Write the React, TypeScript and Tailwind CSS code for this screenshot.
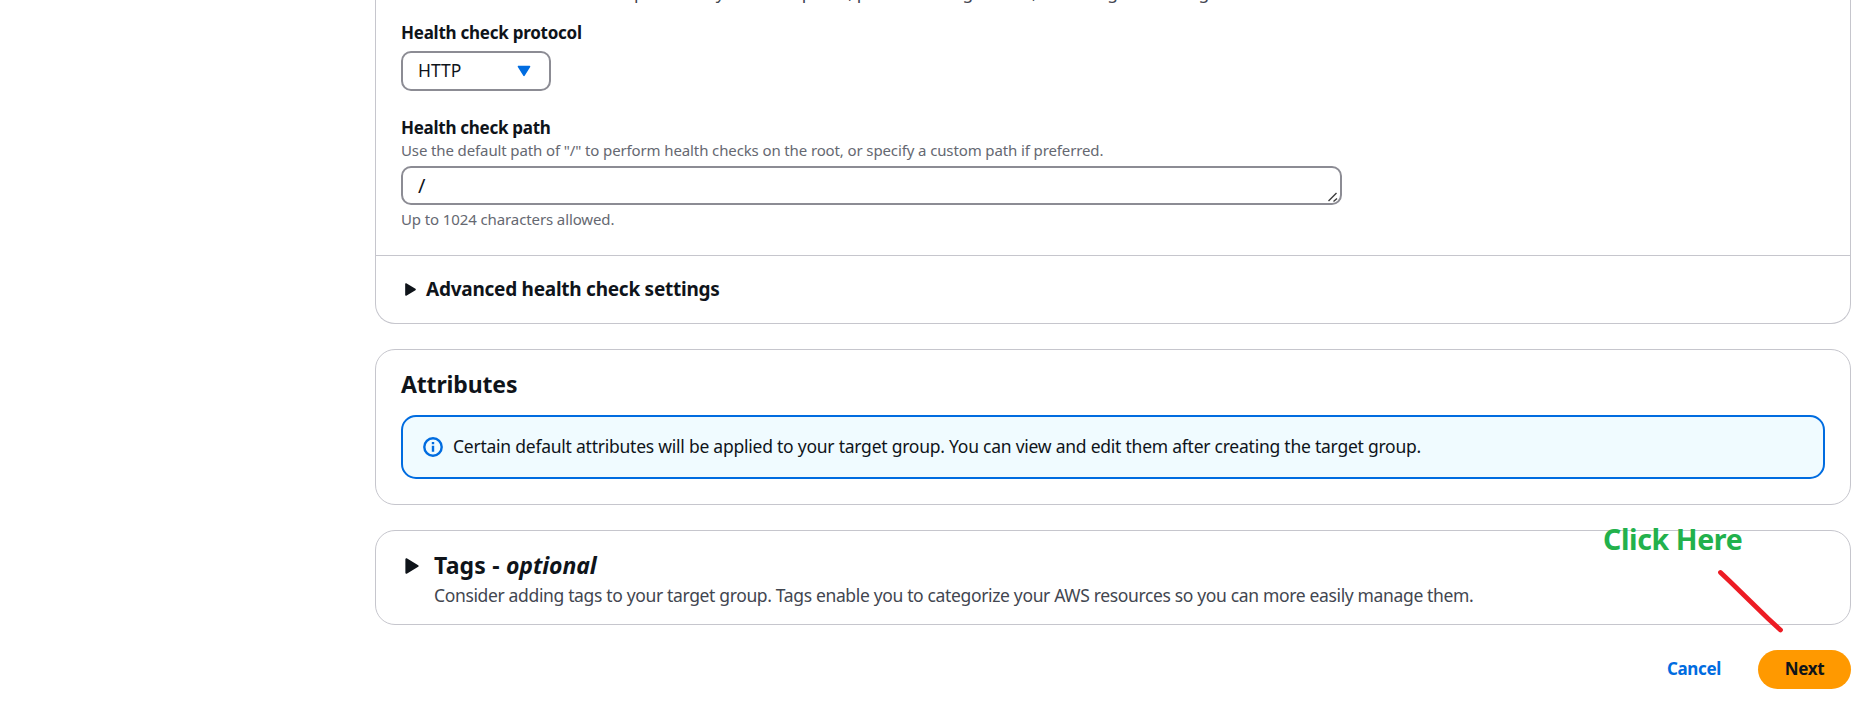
function Caret({ className }: { className: string }) {
  return (
    <svg viewBox="0 0 12 14" className={className} aria-hidden="true">
      <path d="M1 1v12l10-6z" fill="#0f141a" stroke="#0f141a" strokeWidth="1.6" strokeLinejoin="round" />
    </svg>
  );
}

function InfoIcon() {
  return (
    <svg viewBox="0 0 20 20" className="h-5 w-5 shrink-0" fill="none" stroke="#006ce0" strokeWidth="2.4" aria-hidden="true">
      <circle cx="10" cy="10" r="8.7" />
      <path d="M10 8.8v6M10 5v2.3" />
    </svg>
  );
}

function HealthChecks() {
  return (
    <section className="-mt-5 rounded-b-[20px] border border-t-0 border-[#c6c6cd]">
      <div className="px-[25px] pb-[26px]">
        <p className="h-6 text-[17.5px] leading-6 tracking-[-0.325px] text-[#424650]">
          The associated load balancer periodically sends requests, per the settings below, to the registered targets to test their status.
        </p>

        <div className="mt-[17px] text-[17px] leading-6 font-bold tracking-[-0.25px]">Health check protocol</div>
        <button className="mt-1.5 flex h-10 w-[150px] items-center justify-between rounded-[10px] border-2 border-[#8c8c94] pr-[18px] pl-[15px] text-[17.5px] leading-6">
          <span className="pb-0.5">HTTP</span>
          <svg viewBox="0 0 14 12" className="h-3 w-3.5" aria-hidden="true">
            <path d="M1.5 1.5h11L7 10.3z" fill="#006ce0" stroke="#006ce0" strokeWidth="1.6" strokeLinejoin="round" />
          </svg>
        </button>

        <div className="mt-[25px] text-[17px] leading-6 font-bold tracking-[-0.28px]">Health check path</div>
        <p className="text-[15px] leading-5 tracking-[-0.12px] text-[#656871]">
          Use the default path of "/" to perform health checks on the root, or specify a custom path if preferred.
        </p>
        <div className="relative mt-1.5 flex h-[39px] w-[941px] items-center rounded-[10px] border-2 border-[#8c8c94] pl-[15px] text-[20px] leading-6">
          /
          <svg viewBox="0 0 10 10" className="absolute right-0.5 bottom-px h-2.5 w-2.5" stroke="#3c3c3c" strokeWidth="1.4" aria-hidden="true">
            <path d="M.5 9 8.5 1M5.5 9.5 9 6.5" />
          </svg>
        </div>
        <p className="mt-1 text-[15px] leading-5 tracking-[-0.11px] text-[#656871]">Up to 1024 characters allowed.</p>
      </div>
      <div className="flex h-[68px] items-start border-t border-[#c6c6cd] pt-5 pl-[29px]">
        <Caret className="mt-[6.5px] h-[13px] w-[11px]" />
        <h3 className="ml-[10px] text-[19px] leading-[26px] font-bold tracking-[-0.25px]">Advanced health check settings</h3>
      </div>
    </section>
  );
}

function Attributes() {
  return (
    <section className="mt-[25px] h-[156px] rounded-[20px] border border-[#c6c6cd] px-[25px] pt-[19px]">
      <h2 className="text-[23px] leading-[30px] font-bold tracking-[-0.15px]">Attributes</h2>
      <div className="mt-4 flex h-16 items-center gap-2.5 rounded-[15px] border-2 border-[#006ce0] bg-[#f0fbff] pl-5">
        <InfoIcon />
        <p className="pb-0.5 text-[17.5px] leading-6 tracking-[-0.24px]">
          Certain default attributes will be applied to your target group. You can view and edit them after creating the target group.
        </p>
      </div>
    </section>
  );
}

function Tags() {
  return (
    <section className="mt-[25px] flex h-[95px] rounded-[20px] border border-[#c6c6cd] pt-[19px] pl-[29px]">
      <Caret className="mt-2 h-4 w-[14px]" />
      <div className="ml-[15px]">
        <h2 className="text-[23px] leading-[30px] font-bold tracking-[0.2px]">
          Tags - <i className="tracking-[-0.1px]">optional</i>
        </h2>
        <p className="mt-[3px] text-[17.5px] leading-6 tracking-[-0.35px] text-[#424650]">
          Consider adding tags to your target group. Tags enable you to categorize your AWS resources so you can more easily manage them.
        </p>
      </div>
    </section>
  );
}

function Annotation() {
  return (
    <div className="pointer-events-none absolute top-[519px] left-[1603px]">
      <p className="text-[28.5px] leading-[40px] font-bold tracking-[-0.38px] whitespace-nowrap text-[#22b14c]">Click Here</p>
      <svg viewBox="0 0 70 76" className="ml-[113px] h-[76px] w-[70px]" aria-hidden="true">
        <path d="M4.5 13.5 14 22.5l20 19.5 18 17.5 12.5 11.5" fill="none" stroke="#ed1c24" strokeWidth="4.8" strokeLinecap="round" />
      </svg>
    </div>
  );
}

export default function App() {
  return (
    <div className="relative h-[711px] w-[1852px] overflow-hidden bg-white font-['Noto_Sans',sans-serif] text-[#0f141a]">
      <main className="ml-[375px] flex w-[1476px] flex-col">
        <HealthChecks />
        <Attributes />
        <Tags />
        <div className="mt-[25px] flex h-[39px] items-center justify-end text-[17px] leading-6 font-bold tracking-[-0.35px]">
          <button className="mr-[37px] pb-px text-[#006ce0]">Cancel</button>
          <button className="h-[39px] w-[93px] rounded-full bg-[#ff9900] pb-px">Next</button>
        </div>
      </main>
      <Annotation />
    </div>
  );
}
